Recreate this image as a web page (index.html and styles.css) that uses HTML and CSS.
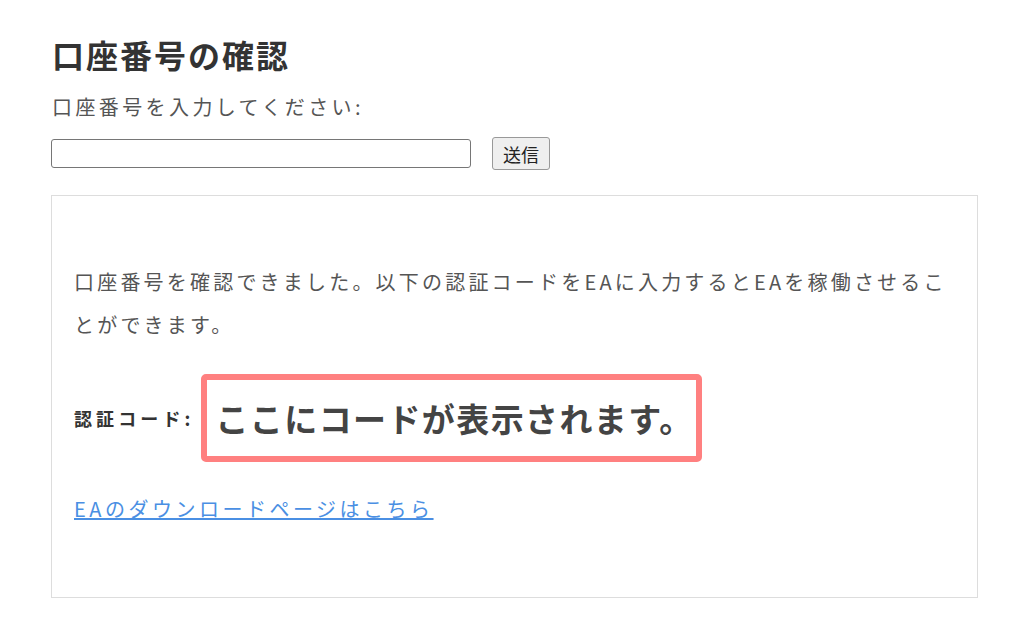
FILE: index.html
```html
<!DOCTYPE html>
<html lang="ja">
<head>
  <meta charset="UTF-8" />
  <title>口座番号の確認</title>
  <link rel="stylesheet" href="styles.css">
</head>
<body>
  <h2>口座番号の確認</h2>

  <form class="account-form">
    <label for="account">口座番号を入力してください:</label>
    <div class="row">
      <input type="text" id="account" />
      <button type="submit">送信</button>
    </div>
  </form>

  <div class="result">
    <p class="message">口座番号を確認できました。以下の認証コードをEAに入力するとEAを稼働させることができます。</p>

    <div class="code-row">
      <span class="code-label">認証コード:</span>
      <span class="code">ここにコードが表示されます。</span>
    </div>

    <a class="download" href="#">EAのダウンロードページはこちら</a>
  </div>
</body>
</html>
```

FILE: styles.css
```css
body {
  font-family: "Noto Sans CJK JP", "Noto Sans", sans-serif;
  color: #555;
  margin: 0;
  padding: 32px 46px 0 51px;
  background: #fff;
}
h2 {
  font-size: 32px;
  font-weight: bold;
  color: #333;
  letter-spacing: 2px;
  margin: 0 0 0 1px;
  line-height: 44px;
}
.account-form {
  margin-top: 17px;
}
label {
  display: block;
  font-size: 20px;
  letter-spacing: 3.4px;
  line-height: 28px;
  margin-left: 1px;
}
.row {
  display: flex;
  align-items: center;
  gap: 21px;
  margin-top: 16px;
}
input[type="text"] {
  width: 420px;
  height: 29px;
  box-sizing: border-box;
  border: 1px solid #767676;
  border-radius: 3px;
  padding: 0 6px;
  margin: 0;
}
button {
  height: 33px;
  box-sizing: border-box;
  padding: 0 10px;
  font-family: "Noto Sans CJK JP", sans-serif;
  font-size: 18px;
  color: #222;
  background: #efefef;
  border: 1px solid #999;
  border-radius: 3px;
}
.result {
  margin-top: 25px;
  width: 927px;
  box-sizing: border-box;
  border: 1px solid #ddd;
  padding: 64px 26px 73px 22px;
}
.message {
  margin: 0;
  font-size: 20px;
  letter-spacing: 3.2px;
  line-height: 43px;
}
.code-row {
  display: flex;
  align-items: center;
  gap: 7px;
  margin-top: 28px;
}
.code-label {
  font-size: 18px;
  font-weight: bold;
  color: #333;
  letter-spacing: 4.1px;
}
.code {
  display: inline-block;
  border: 6px solid #ff8080;
  border-radius: 5px;
  padding: 13px 2px 13px 8px;
  font-size: 33px;
  font-weight: bold;
  color: #444;
  letter-spacing: 1.4px;
  line-height: 50px;
}
.download {
  display: inline-block;
  margin-top: 32px;
  font-size: 20px;
  letter-spacing: 3.5px;
  color: #4a8fe3;
  line-height: 30px;
}
```
